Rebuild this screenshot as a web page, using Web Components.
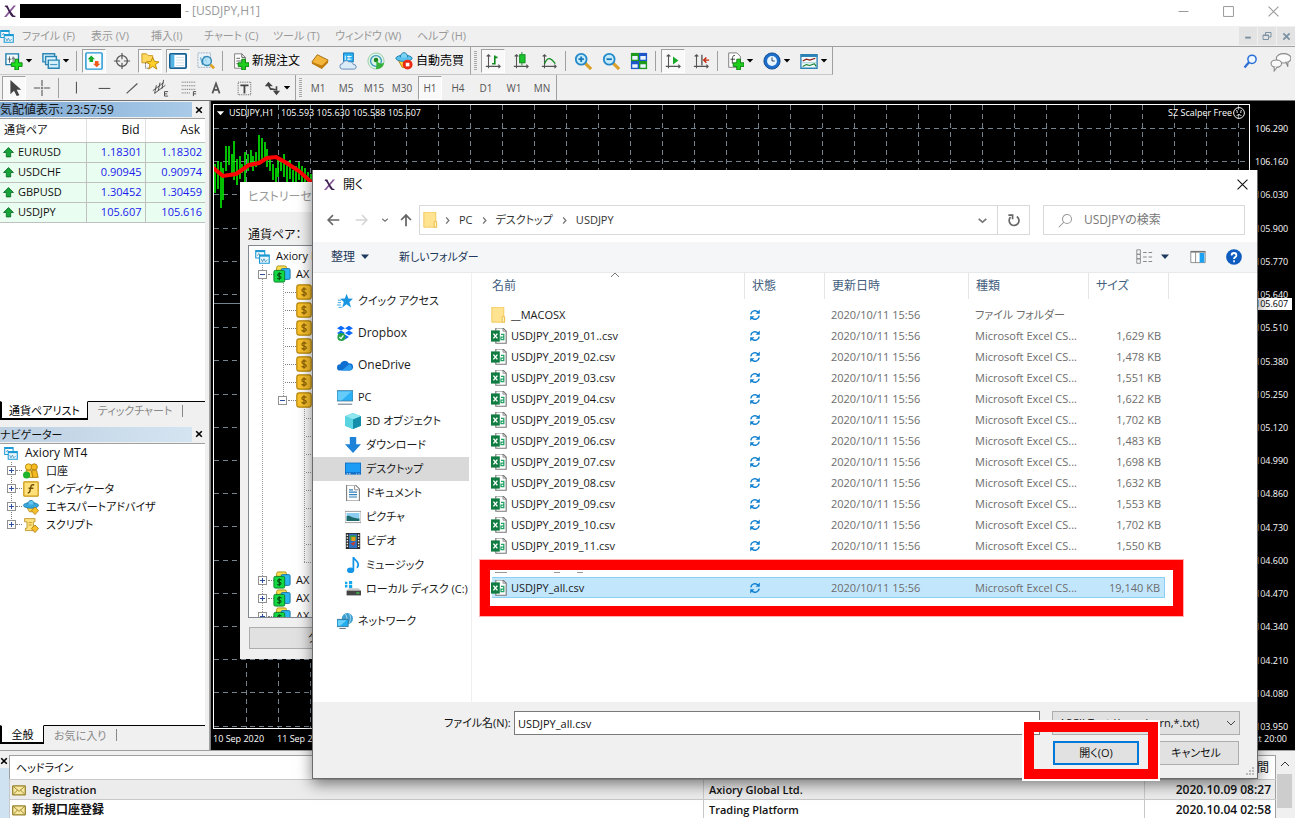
<!DOCTYPE html>
<html lang="ja">
<head>
<meta charset="utf-8">
<title>USDJPY,H1</title>
<style>
  html, body { height: 100%; }
  body {
    margin: 0; overflow: hidden; background: #f0f0f0; color: #111;
    font: 12px/18px "Open Sans", "Noto Sans CJK JP", sans-serif;
    font-feature-settings: "palt";
  }
</style>
</head>
<body>
<trading-app></trading-app>

<script>
/* ---------- icon set ---------- */
const page = '<path d="M4 2h8l4 4v12H4z" fill="#fff" stroke="#777"/><path d="M12 2v4h4M6 7h4M6 10h6M6 13h4" stroke="#555" fill="none"/>';
const plus = '<path d="M12 8h4v4h4v4h-4v4h-4v-4H8v-4h4z" fill="#1fd01f" stroke="#087d08"/>';
const axes = '<path d="M5 3v15M2 16h16M3 5l2-2 2 2M16 14l2 2-2 2" stroke="#555" fill="none" stroke-width="1.2"/>';
const windows2 = '<path d="M1 2h12v10H1z" fill="#fff" stroke="#1d9ad4" stroke-width="1.5"/><path d="M1 3h12" stroke="#1d9ad4" stroke-width="2.5"/><path d="M3 9l2-3 2 3" fill="none" stroke="#2a7fb0"/><path d="M6 8h13v11H6z" fill="#eaf7ff" stroke="#1d9ad4" stroke-width="1.5"/><path d="M6 9h13" stroke="#1d9ad4" stroke-width="2.5"/><path d="M8 13l2 4 2-4 2 4 3-3" fill="none" stroke="#2a7fb0"/>';
const ICONS = {
  brand: '<path d="M16 1h4L4 20H0z" fill="#8a5a9a"/><path d="M2 1h4l4 8 5 7c1 2 2 2 4 2v2c-4 1-6 0-8-3L5 6C4 4 3 3 1 3z" fill="#3d1f4f"/>',
  mt: windows2,
  newchart: '<path d="M1 2h14v12H1z" fill="#f2fbff" stroke="#1d7ba8" stroke-width="1.5"/><path d="M5 5v7M9 5v6M3 8h4M8 7h3" stroke="#555"/><path d="M11 8h4v4h4v4h-4v4h-4v-4H7v-4h4z" fill="#1fe01f" stroke="#087d08"/>',
  profiles: '<path d="M1 2h13v9H1z" fill="#e4f6ff" stroke="#2a85b5" stroke-width="1.6"/><path d="M4 5h12v9H4z" fill="#e4f6ff" stroke="#2a85b5" stroke-width="1.6"/><path d="M7 9h12v9H7z" fill="#d3effc" stroke="#2a85b5" stroke-width="1.6"/><path d="M9 14h8" stroke="#2a85b5"/>',
  market: '<rect x="1" y="1" width="18" height="18" rx="1" fill="#f6fdff" stroke="#2196d4" stroke-width="1.6"/><path d="M7 4l4 4H9v3H5V8H3z" fill="#17a82a"/><path d="M13 17l-4-4h2v-3h4v3h2z" fill="#f25a1d"/>',
  cross: '<circle cx="10" cy="10" r="6" fill="none" stroke="#555" stroke-width="1.4"/><path d="M10 1v7M10 12v7M1 10h7M12 10h7" stroke="#555" stroke-width="1.3"/>',
  favs: '<path d="M1 2h5l2 2h5v8H1z" fill="#ffd860" stroke="#c79417"/><path d="M5 12v6h4" fill="none" stroke="#333" stroke-dasharray="1 1"/><path d="M13 6l2 4.500 5 .5-4 3 1.500 5-4.500-3-4.500 3 1.500-5-4-3 5-.5z" fill="#ffd02a" stroke="#b88306"/>',
  panel: '<rect x="1" y="2" width="18" height="16" rx="1" fill="#fff" stroke="#146094" stroke-width="2"/><path d="M2 3h4v14H2z" fill="#53b4e8"/><path d="M8 6h9M8 9h9M8 12h9M8 15h9" stroke="#cfdce4"/>',
  tester: '<path d="M1 1h14v16H1z" fill="#e9f3f8" stroke="#9ab" stroke-dasharray="2 1"/><path d="M4 6l2 8 2-9 3 7" stroke="#2b86b5" fill="none"/><circle cx="11" cy="10" r="5" fill="#a9def7" fill-opacity=".8" stroke="#3488b5" stroke-width="1.5"/><path d="M15 14l4 4" stroke="#e0a223" stroke-width="3"/>',
  order: page + plus,
  gold: '<path d="M1 11l6-8 12 6-7 9z" fill="#f4b63a" stroke="#9c6606"/><path d="M1 11l11 4 7-6v3l-7 7-11-6z" fill="#c17e10"/>',
  cloud: '<path d="M5 1h11v10H5z" fill="#29aef0" stroke="#1178b5"/><path d="M7 4v5M9 5h5M9 8h5M11 4v5" stroke="#fff"/><path d="M4 19a3 3 0 0 1 0-6 4 4 0 0 1 7-2 4 4 0 0 1 5 3 2.500 2.500 0 0 1 1 5z" fill="#dcebf8" stroke="#5a86b5"/>',
  signal: '<circle cx="10" cy="10" r="9" fill="#ddf3e4" stroke="#95c9a9"/><circle cx="10" cy="10" r="6" fill="none" stroke="#3f9ac0" stroke-width="1.5"/><circle cx="10" cy="9" r="2.500" fill="#18851f"/><path d="M10 10c1 4 0 7 0 9 5 0 8-2 9-7l-4 1" fill="#36b23b"/>',
  robot: '<path d="M3 8l14-1-4 10H8z" fill="#ffce3c" stroke="#b5800c"/><ellipse cx="10" cy="7" rx="9" ry="3.500" fill="#59c1ec" stroke="#197ba8"/><path d="M6 6c0-7 8-7 8 0" fill="#7bd3f5" stroke="#197ba8"/><circle cx="14" cy="14" r="5.500" fill="#ea2a12"/><path d="M12 12h4v4h-4z" fill="#fff"/>',
  bars: axes + '<path d="M12 4v10M12 6h3M9 13h3" stroke="#0c8a1a" stroke-width="1.8" fill="none"/>',
  candles: axes + '<path d="M11 0v15" stroke="#0c8a1a"/><rect x="8.500" y="3" width="6" height="9" fill="#1bc32c" stroke="#0c8a1a"/>',
  line: axes + '<path d="M5 13c3-7 6-8 12 0" stroke="#0c8a1a" stroke-width="1.5" fill="none"/>',
  zoomin: '<path d="M12 12l7 7" stroke="#d9a02b" stroke-width="3.500"/><circle cx="8" cy="8" r="6" fill="#c5ecfc" stroke="#2489c9" stroke-width="2"/><path d="M5 8h6M8 5v6" stroke="#1878b8" stroke-width="2"/>',
  zoomout: '<path d="M12 12l7 7" stroke="#d9a02b" stroke-width="3.500"/><circle cx="8" cy="8" r="6" fill="#c5ecfc" stroke="#2489c9" stroke-width="2"/><path d="M5 8h6" stroke="#1878b8" stroke-width="2"/>',
  tiles: '<path d="M1 1h9v9H1z" fill="#1d9a1d"/><path d="M10 1h9v9h-9z" fill="#1c55c8"/><path d="M1 10h9v9H1z" fill="#1c55c8"/><path d="M10 10h9v9h-9z" fill="#1d9a1d"/><path d="M2.500 4.500h6v4h-6zM11.500 4.500h6v4h-6zM2.500 13.500h6v4h-6zM11.500 13.500h6v4h-6z" fill="#e8f4ff"/>',
  scroll: axes + '<path d="M10 5l6 4.500-6 4.500z" fill="#18a828"/>',
  shift: axes + '<path d="M11 3v12" stroke="#555" stroke-width="1.5"/><path d="M19 9h-6M16 6l-3 3 3 3" stroke="#c22a0c" stroke-width="1.6" fill="none"/>',
  indicators: '<path d="M3 1h9l4 4v12H3z" fill="#fff" stroke="#777"/><path d="M10 4c-3-1-3 3-3 9M5 8h5" stroke="#333" fill="none"/>' + plus,
  clock: '<circle cx="10" cy="10" r="9" fill="#1d6fcb" stroke="#0d478c"/><circle cx="10" cy="10" r="5.500" fill="#e8f6ff"/><path d="M10 6v4h3" stroke="#235" fill="none"/>',
  template: '<path d="M1 3h18v15H1z" fill="#f4fbff" stroke="#2a82b5" stroke-width="1.500"/><path d="M1 4h18" stroke="#2a82b5" stroke-width="3"/><path d="M3 10l4-2 4 1 6-2" stroke="#8a1c0e" fill="none" stroke-width="1.300"/><path d="M3 16l4-2 4 1 5-2 2 3" stroke="#14802a" fill="none" stroke-width="1.300"/><path d="M2 12h16" stroke="#9cc"/>',
  arrow: '<path d="M6 1v16l4-4 3 6 3-1-3-6h5z" fill="#444"/>',
  plusthin: '<path d="M10 1v7M10 12v7M1 10h7M12 10h7M10 9v2M9 10h2" stroke="#555" stroke-width="1.200"/>',
  vline: '<path d="M10.500 3v13" stroke="#555" stroke-width="1.200"/>', hline: '<path d="M4 10.500h13" stroke="#555" stroke-width="1.200"/>',
  trend: '<path d="M4 16L16 5" stroke="#555" stroke-width="1.300"/>',
  channel: '<path d="M2 13l12-9M4 16l12-9M6 7l-2 9M10 4l-2 9M14 1l-2 10" stroke="#444"/><path d="M19 14h-4v5h4M15 16.500h3" stroke="#444" fill="none"/>',
  fibo: '<path d="M3 3.500h15M3 7.500h15M3 11.500h15M3 15.500h10" stroke="#555" stroke-dasharray="1 1"/><path d="M19 14h-3v5M16 16.500h3" stroke="#444" fill="none"/>',
  lettera: '<path d="M6 16l4-11 4 11M7.500 12h5" stroke="#555" stroke-width="1.900" fill="none"/>',
  textbox: '<rect x="3.500" y="3.500" width="14" height="14" fill="none" stroke="#555" stroke-dasharray="1 1"/><path d="M6 7h9M10.500 7v9" stroke="#444" stroke-width="2"/>',
  arrows: '<path d="M2 8l4-5 5 5zM11 13h8l-4 5z" fill="#444"/><path d="M6 7l3 5M9 11l5 1M15 8v5" stroke="#444" stroke-width="1.800"/>',
  find: '<circle cx="12" cy="7" r="5.500" fill="#eef6ff" stroke="#2b6fd6" stroke-width="2"/><path d="M8 11l-6 7" stroke="#2b6fd6" stroke-width="3"/>',
  chat: '<ellipse cx="13" cy="7" rx="7" ry="4.500" fill="#fafafa" stroke="#888"/><path d="M15 10l2 5v-5" fill="#fafafa" stroke="#888"/><ellipse cx="6" cy="12" rx="5" ry="3.500" fill="#fafafa" stroke="#888"/><path d="M4 15v4l3-4" fill="#fafafa" stroke="#888"/>',
  up: '<path d="M10 1l9 9h-5v8H6v-8H1z" fill="#18a33a" stroke="#0a6b24" stroke-width="1.500"/>',
  accounts: '<circle cx="7" cy="5" r="4" fill="#ffd23e" stroke="#a87706"/><circle cx="14" cy="5" r="4" fill="#f4b91f" stroke="#a87706"/><path d="M4 9h6l3 9H4z" fill="#ffd23e" stroke="#a87706"/><path d="M11 9h6l2 9h-7z" fill="#f4b91f" stroke="#a87706"/><circle cx="4.500" cy="15" r="4.500" fill="#1eb32c"/>',
  func: '<rect x="1" y="1" width="18" height="18" rx="1" fill="#ffe07a" stroke="#c9960c" stroke-width="1.500"/><path d="M14 5c-4-1-4 1-5 6-.5 3-1 4-3 4M7 9h6" stroke="#6f4d05" stroke-width="1.800" fill="none"/>',
  expert: '<path d="M4 9h11l-3 7H8z" fill="#ffd345" stroke="#b58410"/><ellipse cx="10" cy="8" rx="9.500" ry="3.500" fill="#38a7de" stroke="#1577a8"/><path d="M6 7c0-7 8-7 8 0" fill="#62c6f0" stroke="#1577a8"/><path d="M15 10l4.500 4.500-4.500 5-4.500-5z" fill="#f7bf2a" stroke="#a87706"/>',
  script: '<path d="M2 2h13v4h-2v8h3v3H3v-3h2V6H2z" fill="#ffe27d" stroke="#b58a1c"/><path d="M7 7h4M7 10h4" stroke="#b58a1c"/><path d="M15 10l4.500 4.500-4.500 5-4.500-5z" fill="#f7bf2a" stroke="#a87706"/>',
  group: '<rect x="4" y="1" width="11" height="12" rx="2" fill="#f7dc4e" stroke="#a88d10"/><rect x="9" y="4" width="10" height="12" rx="1.500" fill="#2ab5f0" stroke="#1471a3"/><rect x="1" y="6" width="12" height="13" rx="1.500" fill="#12d843" stroke="#067a24"/><path d="M9.500 10c-4-2-6 2-2.500 2.500s2 4-2.500 2.500M7 8v9" stroke="#054d12" fill="none" stroke-width="1.200"/>',
  coin: '<rect x="1" y="1" width="18" height="18" rx="3" fill="#fac22b" stroke="#b8860b" stroke-width="1.500"/><path d="M13 7c-5-3-8 2-3 3s3 6-3 3M10 4v12" stroke="#8c6206" fill="none" stroke-width="1.500"/>',
  mail: '<rect x="1" y="4" width="18" height="13" rx="1" fill="#f7e7a0" stroke="#96822a" stroke-width="1.800"/><path d="M2 5l8 7 8-7M2 16l6-6M18 16l-6-6" fill="none" stroke="#96822a" stroke-width="1.300"/>',
  back: '<path d="M3 10h16M10 3l-7 7 7 7" fill="none" stroke="#666" stroke-width="2.200"/>',
  fwd: '<path d="M1 10h16M10 3l7 7-7 7" fill="none" stroke="#d5d5d5" stroke-width="2.200"/>',
  upnav: '<path d="M10 19V3M3 10l7-7 7 7" fill="none" stroke="#666" stroke-width="2.500"/>',
  chev: '<path d="M3 7l7 6 7-6" fill="none" stroke="currentColor" stroke-width="3"/>',
  chevthin: '<path d="M2 6l8 8 8-8" fill="none" stroke="currentColor" stroke-width="2"/>',
  chevr: '<path d="M7 3l6 7-6 7" fill="none" stroke="currentColor" stroke-width="3"/>',
  caret: '<path d="M2 5h16l-8 9z" fill="currentColor"/>',
  refresh: '<path d="M5 6a7 7 0 1 0 9-1" fill="none" stroke="#666" stroke-width="2.400"/><path d="M2 3h6v6" fill="none" stroke="#666" stroke-width="2.400"/>',
  glass: '<circle cx="12" cy="8" r="6" fill="none" stroke="#999" stroke-width="1.400"/><path d="M8 12l-7 7" stroke="#999" stroke-width="1.400"/>',
  close: '<path d="M1 1l18 18M19 1L1 19" stroke="currentColor" stroke-width="2"/>',
  closebold: '<path d="M3 3l14 14M17 3L3 17" stroke="currentColor" stroke-width="4"/>',
  min: '<path d="M1 10h18" stroke="currentColor" stroke-width="1.800"/>',
  max: '<path d="M1 1h18v18H1z" fill="none" stroke="currentColor" stroke-width="1.800"/>',
  minbold: '<path d="M3 14h14" stroke="currentColor" stroke-width="5"/>',
  restore: '<path d="M7 8V3h11v9h-4M2 8h11v9H2zM2 9h11" fill="none" stroke="currentColor" stroke-width="2"/>',
  folder: '<path d="M1 0h15v12l1 1v6H1z" fill="#ffe391" stroke="#f0c24b"/><path d="M14 12h3v7h-3z" fill="#fff2c4" stroke="#e8b63a"/>',
  view: '<path d="M2 2h4v5H2zM2 7h4v5H2zM2 12h4v5H2z" fill="none" stroke="#888"/><path d="M9 5h4M15 5h4M9 10h4M15 10h4M9 15h4M15 15h4" stroke="#888" stroke-width="1.200"/>',
  pane: '<path d="M1 3h18v14H1z" fill="#fff" stroke="#777"/><path d="M1 3.500h18" stroke="#777" stroke-width="2"/><path d="M7 4v13" stroke="#777"/><path d="M12 5h6v12h-6z" fill="#1ba1f2"/>',
  help: '<circle cx="10" cy="10" r="9.800" fill="#0f5cc0"/><path d="M7 8c0-4 6-4 6 0 0 2-3 2-3 4.500" fill="none" stroke="#fff" stroke-width="2.200"/><path d="M9 14h2v2.500H9z" fill="#fff"/>',
  star: '<path d="M12 1l2.200 6 5.800.3-4.500 4 2 6.700-5.500-4-5.500 4 2-6.700-4.500-4 5.800-.3z" fill="#1795e0"/><path d="M1 9h4M1 12h4M0 15h5M2 18h4" stroke="#1795e0"/>',
  dropbox: '<path d="M5 1l5 3-5 3-5-3zM15 1l5 3-5 3-5-3zM5 7l5 3-5 3-5-3zM15 7l5 3-5 3-5-3zM10 12l5 3-5 3-5-3z" fill="#0a6bff"/><circle cx="5.500" cy="15" r="5" fill="#21a046"/><path d="M3 15l2 2 3-4" stroke="#fff" fill="none" stroke-width="1.500"/>',
  onedrive: '<path d="M4 17a4 4 0 0 1 0-8 6 6 0 0 1 11-1 4.500 4.500 0 0 1 1 9z" fill="#0f6fd0"/><path d="M6 17l9-8a4.500 4.500 0 0 1 2 8z" fill="#2a9df0"/>',
  pc: '<path d="M0 2h20v13H0z" fill="#2bb0f5" stroke="#4a7b98"/><path d="M1 3h17L6 14H1z" fill="#66cdfb"/><path d="M1 19h18" stroke="#789" stroke-width="1.500"/>',
  cube: '<path d="M10 0l10 4v12l-10 4L0 16V4z" fill="#28b8d0"/><path d="M10 0l10 4-10 4L0 4z" fill="#90e6ee"/><path d="M0 4l10 4v12L0 16z" fill="#59d4e0"/><path d="M10 8l10-4v12l-10 4z" fill="#148eab"/>',
  download: '<path d="M6 0h8v9h6L10 20 0 9h6z" fill="#1d83d8"/>',
  desktop: '<path d="M0 2h20v15H0z" fill="#0f6dc4"/><path d="M1 3h18v11H1z" fill="#1c9cf5"/><path d="M2 16h2M5 16h2M14 16h1M17 16h1" stroke="#fff"/>',
  doc: '<path d="M2 0h11l5 5v15H2z" fill="#fff" stroke="#777" stroke-width="1.300"/><path d="M12 1v5h5" stroke="#777" fill="none"/><path d="M5 6h5M5 9h10M5 12h10M5 15h10" stroke="#2f7fb8" fill="none" stroke-width="1.500"/>',
  picture: '<path d="M0 3h20v14H0z" fill="#fff" stroke="#888"/><path d="M2 5h16v10H2z" fill="#8ccdf2"/><path d="M2 9c4-2 7 3 16 3v3H2z" fill="#1d6a6a"/>',
  video: '<path d="M1 0h18v20H1z" fill="#2b2b2b"/><path d="M5 1h10v18H5z" fill="#2f6fc0"/><path d="M6 3h8v6H6z" fill="#3b9a42"/><path d="M8 5h5v5H8z" fill="#e99a1c"/><path d="M7 13l6-2-2 5z" fill="#c83a2a"/><path d="M3 2v17M17 2v17" stroke="#eee" stroke-width="1.800" stroke-dasharray="1.800 1.600"/>',
  music: '<ellipse cx="7" cy="16.500" rx="4.500" ry="3.500" fill="#1595e8"/><path d="M10.500 16V0c1 4 6 5 6 9 0 2-1 4-2 4" fill="none" stroke="#1595e8" stroke-width="2.200"/>',
  disk: '<path d="M0 1h3v3H0zM5 0h4v4H5zM0 5h3v3H0zM5 5h4v4H5z" fill="#16a8ea"/><path d="M2 12l3-3h12l3 3z" fill="#c8c8c8"/><path d="M2 12h18v6H2z" fill="#444"/><path d="M14 15h4" stroke="#3be052" stroke-width="1.500"/>',
  network: '<circle cx="13" cy="7" r="7" fill="#3e9fd0"/><path d="M10 1c3 3 3 8 1 12M15 1c3 3 2 9 0 12" stroke="#bfe3ee" fill="none"/><path d="M0 8h14v9H0z" fill="#22aef2" stroke="#2f6d8f"/><path d="M1 9h11l-8 7H1z" fill="#6bd0fa"/><path d="M3 19.500h8" stroke="#678" stroke-width="1.500"/>',
  sync: '<path d="M3 9a7 7 0 0 1 12-4M17 11a7 7 0 0 1-12 4" fill="none" stroke="#1080d0" stroke-width="2.400"/><path d="M18 1v7h-7zM2 19v-7h7z" fill="#1080d0"/>',
  csv: '<path d="M6 0h9l4 4v15H6z" fill="#fff" stroke="#777" stroke-width="1.400"/><path d="M15 0v4h4" fill="none" stroke="#777"/><path d="M12.500 8h3.500v6.500h-3.500v-3h3.500" fill="none" stroke="#21a366" stroke-width="1.600"/><path d="M0 3h11v14H0z" fill="#107c41"/><path d="M3 7l5 6M8 7l-5 6" stroke="#fff" stroke-width="1.800"/>',
  sad: '<circle cx="10" cy="10" r="9" fill="none" stroke="#fff" stroke-width="1.600"/><path d="M5 6l3 1M15 6l-3 1M7 8v2M13 8v2M6 15l2-2h4l2 2" stroke="#fff" stroke-width="1.500" fill="none"/>'
};
const icon = (name, size = 16) =>
  `<svg class="ico" width="${size}" height="${size}" viewBox="0 0 20 20" aria-hidden="true">${ICONS[name]}</svg>`;

/* ---------- base element ---------- */
class UiElement extends HTMLElement {
  connectedCallback() {
    if (this.shadowRoot) return;
    const root = this.attachShadow({ mode: 'open' });
    const t = document.createElement('template');
    t.innerHTML = `<style>*{box-sizing:border-box}.ico{display:block;flex:none}button{font:inherit;color:inherit;background:none;border:0;padding:0;margin:0}${this.css}</style>${this.html()}`;
    root.append(t.content.cloneNode(true));
  }
  get css() { return ''; }
  attr(n, d = '') { return this.getAttribute(n) ?? d; }
}
const define = (tag, css, html) => customElements.define(tag, class extends UiElement {
  get css() { return css; }
  html() { return html(this); }
});

/* ---------- window chrome ---------- */
define('title-bar', `
  :host{display:flex;align-items:center;height:26px;background:#fff;color:#999;padding:0 16px 4px 4px}
  .mask{width:161px;height:14px;background:#000;margin:0 4px}
  .text{flex:1}
  .win{display:flex;gap:34px}
`, () => `${icon('brand', 12)}<span class="mask"></span><span class="text">- [USDJPY,H1]</span>
  <span class="win"><button aria-label="最小化">${icon('min', 11)}</button><button aria-label="最大化">${icon('max', 11)}</button><button aria-label="閉じる">${icon('close', 11)}</button></span>`);

define('menu-bar', `
  :host{display:flex;align-items:center;height:21px;background:#f0f0f0;color:#999;border-bottom:1px solid #a0a0a0;font-size:11px}
  nav{display:grid;grid-template-columns:69px 60px 53px 69px 62px 82px 60px;flex:1;margin-left:8px}
  a{color:inherit;text-decoration:none;white-space:nowrap}
  .mdi{display:flex;gap:1px}
  .mdi button{width:18px;height:18px;background:#e3e3e3;color:#7d93a5;display:grid;place-items:center}
`, () => `${icon('mt', 14)}<nav>${['ファイル (F)', '表示 (V)', '挿入(I)', 'チャート (C)', 'ツール (T)', 'ウィンドウ (W)', 'ヘルプ (H)']
    .map(t => `<a href="#">${t}</a>`).join('')}</nav>
  <span class="mdi"><button aria-label="最小化">${icon('minbold', 8)}</button><button aria-label="元に戻す">${icon('restore', 10)}</button><button aria-label="閉じる">${icon('closebold', 9)}</button></span>`);

define('tool-button', `
  :host{display:flex;color:#555}
  button{display:flex;align-items:center;height:25px}
  .cell{width:28px;height:24px;display:grid;place-items:center}
  :host([pressed]) .cell{width:24px;margin:0 2px;border:1px solid #a0a0a0;border-right-color:#fff;border-bottom-color:#fff;background:#f9f9f9}
  .drop{width:12px;margin-left:-3px;color:#000}
  .label{color:#000;margin-left:-2px;padding-right:6px;white-space:nowrap;line-height:18px}
  .tf{font-size:10px}
`, el => {
    const tf = el.attr('period');
    return `<button aria-label="${el.attr('icon', tf)}"><span class="cell${tf ? ' tf' : ''}">${tf || icon(el.attr('icon'), 18)}</span>${el.hasAttribute('drop') ? `<span class="drop">${icon('caret', 8)}</span>` : ''}${el.textContent ? '<span class="label"><slot></slot></span>' : ''}</button>`;
  });

define('tool-bars', `
  :host{display:block;background:#f0f0f0;border-bottom:1px solid #707070}
  .row{display:flex;align-items:center;height:28px}
  .row+.row{height:25px}
  .band{display:flex;align-items:center;height:100%;border-right:1px solid #a0a0a0;border-bottom:1px solid #c8c8c8}
  .row+.row .band{border-bottom:0}
  .sep{width:1px;height:20px;background:#a0a0a0;margin:0 3px 0 2px}
  .grip{width:3px;height:20px;margin:0 2px 0 3px;background:repeating-linear-gradient(#a8a8a8 0 1px,#f0f0f0 1px 2px)}
  .end{margin-left:auto;display:flex;align-items:center;gap:12px;padding-right:4px}
`, () => {
    const b = (i, extra = '', label = '') => `<tool-button icon="${i}" ${extra}>${label}</tool-button>`;
    const sep = '<span class="sep"></span>', grip = '<span class="grip"></span>';
    return `<div class="row"><div class="band">${b('newchart', 'drop')}${b('profiles', 'drop')}${sep}${b('market', 'pressed')}${b('cross')}${b('favs', 'pressed')}${b('panel', 'pressed')}${b('tester')}${sep}${b('order', '', '新規注文')}${b('gold')}${b('cloud')}${b('signal')}${b('robot', '', '自動売買')}</div>
    <div class="band">${grip}${b('bars', 'pressed')}${b('candles')}${b('line')}${sep}${b('zoomin')}${b('zoomout')}${b('tiles')}${sep}${b('scroll', 'pressed')}${b('shift')}${sep}${b('indicators', 'drop')}${b('clock', 'drop')}${b('template', 'drop')}</div>
    <span class="end"><button aria-label="検索">${icon('find', 15)}</button><button aria-label="チャット">${icon('chat', 21)}</button></span></div>
    <div class="row"><div class="band">${b('arrow', 'pressed')}${b('plusthin')}${sep}${['vline', 'hline', 'trend', 'channel', 'fibo', 'lettera', 'textbox'].map(i => b(i)).join('')}${b('arrows', 'drop')}</div>
    <div class="band">${grip}${['M1', 'M5', 'M15', 'M30', 'H1', 'H4', 'D1', 'W1', 'MN'].map(p => `<tool-button period="${p}" ${p === 'H1' ? 'pressed' : ''}></tool-button>`).join('')}</div></div>`;
  });

/* ---------- left docks ---------- */
define('dock-panel', `
  :host{display:flex;flex-direction:column;min-height:0;background:#f0f0f0;border-right:1px solid #a0a0a0;padding-right:4px}
  header{display:flex;align-items:center;height:17px;line-height:15px}
  .cap{flex:1;background:linear-gradient(90deg,#7ea9d4,#a9cbe8);height:15px;white-space:nowrap}
  :host([inactive]) .cap{background:linear-gradient(90deg,#bcd0e2,#d5e4f1);font-size:11px}
  header button{width:13px;display:grid;place-items:center;color:#000}
  .body{flex:1;background:#fff;overflow:hidden;min-height:0;border-top:1px solid #a0a0a0}
  .tabs{display:flex;height:25px;color:#888;font-size:11px}
  .tabs button{height:19px;line-height:17px;padding:0 10px;border-top:1px solid #000;white-space:nowrap}
  .tabs .on{background:#fff;color:#000;border:1px solid #000;border-top-color:#fff;border-width:1px 1px 2px 2px;padding:0 7px;min-width:44px}
  .tabs .fill{flex:1;border-top:1px solid #000;height:19px;padding-top:3px}
  .fill::before{content:"";display:block;width:1px;height:12px;background:#888}
`, el => `<header><span class="cap">${el.attr('caption')}</span><button aria-label="閉じる">${icon('closebold', 8)}</button></header>
  <div class="body"><slot></slot></div>
  <div class="tabs" role="tablist">${el.attr('tabs').split(',').map((t, i) => `<button role="tab" class="${i ? '' : 'on'}">${t}</button>`).join('')}<span class="fill"></span></div>`);

define('market-watch', `
  :host{display:block}
  table{width:100%;border-collapse:collapse;table-layout:fixed}
  th{font-weight:400;text-align:right;height:23px;padding:0 5px;border-right:1px solid #e0e0e0;border-bottom:1px solid #c0c0c0}
  th:first-child{text-align:left;padding-left:4px;font-size:11px}
  td{height:20px;padding:0 3px;background:#e9fdf0;border:solid #c0c0c0;border-width:0 1px 1px 0;text-align:right;color:#1a1aee;font-size:11px;line-height:16px}
  td:first-child{color:#111;text-align:left}
  tr>*:last-child{border-right:0}
  .sym{display:flex;gap:4px;align-items:center}
`, () => `<table><colgroup><col style="width:86px"><col style="width:59px"><col></colgroup><thead><tr><th>通貨ペア</th><th>Bid</th><th>Ask</th></tr></thead><tbody>${
    [['EURUSD', '1.18301', '1.18302'], ['USDCHF', '0.90945', '0.90974'], ['GBPUSD', '1.30452', '1.30459'], ['USDJPY', '105.607', '105.616']]
      .map(([s, a, b]) => `<tr><td><span class="sym">${icon('up', 11)}${s}</span></td><td>${a}</td><td>${b}</td></tr>`).join('')}</tbody></table>`);

/* Tree rows: nested <ul>s; dotted lines are the backgrounds of the branches. */
const treeCss = `
  ul{list-style:none;margin:0;padding:0}
  .node{display:flex;align-items:center;height:18px;white-space:nowrap}
  .tog{width:9px;height:9px;flex:none;border:1px solid #919191;background:linear-gradient(#2b4e9e,#2b4e9e) center/5px 1px no-repeat,linear-gradient(#2b4e9e,#2b4e9e) center/1px 5px no-repeat,#fff}
  .tog.open{background:linear-gradient(#2b4e9e,#2b4e9e) center/5px 1px no-repeat,#fff}
  .dots{height:1px;flex:none;border-top:1px dotted #808080}
`;
define('nav-tree', `${treeCss}
  :host{display:block}
  ul{font-size:11px}
  .root{padding-left:4px;gap:7px}
  li{padding-left:7px;background:repeating-linear-gradient(#808080 0 1px,#fff 1px 2px) 11px 0/1px 100% no-repeat}
  li:last-child{background-size:1px 9px}
  .dots{width:6px;margin-right:1px}
  .ico+span{margin-left:7px}
`, () => `<div class="node root">${icon('mt', 14)}Axiory MT4</div><ul>${
    [['accounts', '口座'], ['func', 'インディケータ'], ['expert', 'エキスパートアドバイザ'], ['script', 'スクリプト']]
      .map(([i, t]) => `<li><div class="node"><span class="tog"></span><span class="dots"></span>${icon(i, 16)}<span>${t}</span></div></li>`).join('')}</ul>`);

/* ---------- chart ---------- */
define('price-chart', `
  :host{display:grid;grid-template:3px 1fr 21px/2px 1fr 45px;background:#000;color:#fff;font-size:9px;line-height:12px;min-width:0;min-height:0;overflow:hidden;border-left:1px solid #808080}
  .plot{grid-area:2/2;position:relative;border:1px solid #fff;overflow:hidden}
  .plot svg.grid{position:absolute;inset:0;width:100%;height:100%}
  .legend{position:relative;display:flex;justify-content:space-between;padding:2px 4px 0 2px}
  .legend span{display:flex;gap:4px;align-items:center;white-space:pre}
  .legend span+span{gap:1px}
  .prices{grid-area:2/3;display:flex;flex-direction:column;justify-content:space-between;padding:19px 0 0 5px;margin-bottom:-4px;position:relative}
  .now{position:absolute;left:2px;right:3px;top:194px;padding-left:3px;background:#fff;color:#000}
  .time{grid-area:3/2/4/4;display:flex;padding:4px 8px 0 0;white-space:nowrap}
  .time span{width:64px}
  .time .last{margin-left:auto;width:auto}
`, () => {
    const bars = [[1, 60, 88], [4, 57, 84], [7, 58, 103], [9, 64, 95], [12, 42, 66], [15, 42, 60], [18, 50, 70], [20, 37, 75], [23, 55, 80], [26, 52, 74], [28, 60, 68], [31, 48, 78], [34, 50, 66], [37, 46, 62], [39, 52, 66], [42, 48, 62], [45, 31, 56], [48, 34, 54], [51, 38, 55], [53, 45, 62], [56, 52, 66], [59, 60, 75], [62, 64, 78], [64, 55, 72], [67, 58, 66], [70, 50, 72], [73, 60, 80], [76, 56, 74], [79, 66, 84], [82, 62, 78], [85, 58, 75], [88, 62, 82], [91, 64, 80], [94, 68, 85], [97, 70, 92]];
    const v = Array.from({ length: 33 }, (_, i) => `M${32.5 + 32 * i} 0V2000`).join('');
    const h = Array.from({ length: 19 }, (_, i) => `M0 ${Math.round(24 + 33.2 * i) - .5}H3000`).join('');
    const labels = '106.290 106.160 106.030 105.900 105.770 105.640 105.510 105.380 105.250 105.120 104.990 104.860 104.730 104.600 104.470 104.340 104.210 104.080 103.950'.split(' ');
    return `<div class="plot"><svg class="grid" aria-hidden="true"><path d="${v}${h}" stroke="#75838f" stroke-dasharray="5 4" fill="none"/><path d="M0 198.500H3000" stroke="#75838f"/><path d="${bars.map(b => `M${b[0]} ${b[1] - 1}V${b[2]}`).join('')}" stroke="#0f0" stroke-width="1.500"/><path d="M-2 62l11 9 13-2 13-9 10-2 8-5 9-1 9 5 14 9 10 9 12 10" fill="none" stroke="#f00" stroke-width="4"/></svg>
      <div class="legend"><span>${icon('caret', 9)}USDJPY,H1   105.593 105.630 105.588 105.607</span><span>SZ Scalper Free${icon('sad', 12)}</span></div></div>
      <div class="prices">${labels.map(l => `<span>${l}</span>`).join('')}<span class="now">105.607</span></div>
      <div class="time"><span>10 Sep 2020</span><span>11 Sep 2020</span><span class="last">Oct 20:00</span></div>`;
  });

/* ---------- history centre ---------- */
define('history-center', `${treeCss}
  :host{display:flex;flex-direction:column;background:#f0f0f0}
  h2{margin:0;font-weight:400;font-size:12px;background:#fff;color:#999;height:30px;line-height:30px;padding-left:8px;white-space:nowrap;flex:none}
  .cap{padding:14px 8px 1px;white-space:nowrap}
  .list{flex:1;min-height:0;margin-left:8px;background:#fff;border:1px solid #828790;overflow:hidden;padding-top:1px}
  .root{padding-left:6px;gap:6px;font-size:11px}
  .list ul{font-size:11px}
  .g{padding-left:9px;background:repeating-linear-gradient(#999 0 1px,#fff 1px 2px) 13px 0/1px 100% no-repeat}
  .g>.node>.dots{width:6px;margin-left:1px}
  .g>.node .ico{margin:0 5px 0 -1px}
  .kids{padding-left:20px}
  .c{background:repeating-linear-gradient(#999 0 1px,#fff 1px 2px) 5px 0/1px 100% no-repeat}
  .c:last-child{background-size:1px 9px}
  .gap{width:6px;flex:none}
  .long{width:11px;margin-left:1px}
  .short{width:8px;margin-left:1px}
  .leaf{padding-left:26px}
  .leaf li{height:18px;background:repeating-linear-gradient(#999 0 1px,#fff 1px 2px) 0 0/1px 100% no-repeat,repeating-linear-gradient(90deg,#999 0 1px,#fff 1px 2px) 0 9px/9px 1px no-repeat}
  .leaf li:last-child{background-size:1px 9px,9px 1px}
  .act{flex:none;margin:9px 0 10px 9px;height:22px;border:1px solid #adadad;background:#e1e1e1;text-align:left;padding-left:58px;white-space:nowrap}
`, () => {
    const g = (open, kids = '') => `<li class="g"><div class="node"><span class="tog ${open}"></span><span class="dots"></span>${icon('group', 18)}AX</div>${kids}</li>`;
    const coin = `<li class="c"><div class="node"><span class="gap"></span><span class="dots long"></span>${icon('coin', 16)}</div></li>`;
    const last = `<li class="c"><div class="node"><span class="tog open"></span><span class="dots short"></span>${icon('coin', 16)}</div><ul class="leaf">${'<li></li>'.repeat(9)}</ul></li>`;
    return `<h2>ヒストリーセンター</h2><div class="cap">通貨ペア：</div>
    <div class="list"><div class="node root">${icon('mt', 15)}Axiory MT4</div><ul>${g('open', `<ul class="kids">${coin.repeat(6)}${last}</ul>`)}${g('')}${g('')}${g('')}</ul></div>
    <button class="act">ダウンロード</button>`;
  });

/* ---------- open dialog ---------- */
define('highlight-frame', `:host{display:block;border:10px solid #f00;pointer-events:none;outline:1px solid #ffb0b0}`, () => '');

define('path-bar', `
  :host{display:flex;align-items:center;height:30px;margin:0 12px 0 13px;color:#333;font-size:11px}
  .nav{display:flex;align-items:center;width:93px;color:#777}
  .nav button:nth-child(1){margin-right:15px}.nav button:nth-child(2){margin-right:12px}.nav button:nth-child(3){margin-right:10px}
  .addr{flex:1;display:flex;align-items:center;height:30px;border:1px solid #d9d9d9;padding-left:3px}
  .addr a{color:inherit;text-decoration:none;margin:0 7px}
  .first{margin-left:4px}
  .chevs{color:#777}
  .dd{margin-left:auto;padding:0 9px;color:#777}
  .re{height:28px;width:32px;border-left:1px solid #d9d9d9;display:grid;place-items:center}
  label{display:flex;align-items:center;width:202px;height:30px;border:1px solid #d9d9d9;margin-left:13px;padding-left:14px;gap:11px;font-size:12px}
  input{border:0;font:inherit;padding:0;width:140px;background:none}
  input::placeholder{color:#777;opacity:1}
`, () => {
    const sep = (c = '') => `<span class="chevs ${c}">${icon('chevr', 9)}</span>`;
    return `<span class="nav"><button aria-label="戻る">${icon('back', 14)}</button><button aria-label="進む">${icon('fwd', 14)}</button><button aria-label="履歴">${icon('chev', 8)}</button><button aria-label="上へ">${icon('upnav', 14)}</button></span>
    <span class="addr">${icon('folder', 16)}${sep('first')}<a href="#">PC</a>${sep()}<a href="#">デスクトップ</a>${sep()}<a href="#">USDJPY</a><button class="dd" aria-label="一覧">${icon('chev', 11)}</button><button class="re" aria-label="更新">${icon('refresh', 14)}</button></span>
    <label>${icon('glass', 15)}<input aria-label="検索" placeholder="USDJPYの検索"></label>`;
  });

define('command-bar', `
  :host{display:flex;align-items:center;height:31px;margin-top:7px;background:#f5f6f7;border-bottom:1px solid #e8e9ea;color:#1e395b;padding:0 15px 0 18px}
  button{display:flex;align-items:center;gap:5px;white-space:nowrap;margin-right:29px}
  .new{font-size:11px}
  .r{margin-left:auto;display:flex;align-items:center}
  .r button{gap:7px;margin:0 0 0 20px}
`, () => `<button>整理${icon('caret', 10)}</button><button class="new">新しいフォルダー</button>
  <span class="r"><button aria-label="表示">${icon('view', 18)}${icon('caret', 10)}</button><button aria-label="プレビュー">${icon('pane', 16)}</button><button aria-label="ヘルプ">${icon('help', 16)}</button></span>`);

define('place-list', `
  :host{display:block;width:159px;padding-top:16px;border-right:1px solid #f0f0f0;font-size:11px}
  ul{list-style:none;margin:0 0 8px;padding:0}
  li{width:156px}
  a{display:flex;align-items:center;gap:5px;height:24px;padding-left:24px;color:#1a1a1a;text-decoration:none;white-space:nowrap}
  .sub a{padding-left:32px}
  .on{background:#d9d9d9}
  .lat{font-size:12px}
`, () => {
    const li = ([i, t, sub, on]) => `<li class="${sub ? 'sub' : ''} ${on ? 'on' : ''}"><a href="#">${icon(i, 16)}${t}</a></li>`;
    return [
      [['star', 'クイック アクセス']], [['dropbox', 'Dropbox']], [['onedrive', 'OneDrive']],
      [['pc', 'PC'], ['cube', '3D オブジェクト', 1], ['download', 'ダウンロード', 1], ['desktop', 'デスクトップ', 1, 1], ['doc', 'ドキュメント', 1], ['picture', 'ピクチャ', 1], ['video', 'ビデオ', 1], ['music', 'ミュージック', 1], ['disk', 'ローカル ディスク (C:)', 1]],
      [['network', 'ネットワーク']]
    ].map((g, n) => `<ul class="${n === 1 || n === 2 ? 'lat' : ''}">${g.map(li).join('')}</ul>`).join('');
  });

define('file-table', `
  :host{display:block;flex:1;padding-left:20px;min-width:0}
  table{width:100%;border-collapse:separate;border-spacing:0;table-layout:fixed}
  th{font-weight:400;text-align:left;height:26px;padding:0 0 0 7px;color:#44607e;border-left:1px solid #e5e5e5;position:relative}
  th:first-child{padding:0;border:0}
  th:last-child{border:0;background:linear-gradient(#e5e5e5,#e5e5e5) 3px 0/1px 100% no-repeat}
  .sort{position:absolute;left:118px;top:-3px;transform:rotate(180deg);color:#777}
  td{height:21px;padding:0 0 0 7px;color:#6d6d6d;white-space:nowrap;font-size:11px;line-height:19px;border:1px solid transparent;border-width:1px 0}
  td:first-child{padding:0;color:#1a1a1a}
  td:nth-child(2){padding-left:5px}
  td:nth-child(5){text-align:right;padding-right:4px}
  .n{display:flex;align-items:center;gap:4px;margin-left:-1px}
  .on td:not(:last-child){background:#c2e7fd;border-color:#8ad0f5}
  .on td:nth-child(5){border-right:1px solid #8ad0f5}
  thead::after{content:"";display:block;height:5px}
`, () => {
    const row = (n, size, i = 'csv', type = 'Microsoft Excel CS...', cls = '') => `<tr class="${cls}"><td><span class="n">${icon(i, 16)}${n}</span></td><td>${icon('sync', 12)}</td><td>2020/10/11 15:56</td><td>${type}</td><td>${size}</td><td></td></tr>`;
    const sizes = '1,629 1,478 1,551 1,622 1,702 1,483 1,698 1,632 1,553 1,702 1,550'.split(' ');
    return `<table><colgroup><col style="width:252px"><col style="width:80px"><col style="width:144px"><col style="width:120px"><col style="width:77px"><col></colgroup>
    <thead><tr><th>名前<span class="sort">${icon('chevthin', 10)}</span></th><th>状態</th><th>更新日時</th><th>種類</th><th>サイズ</th><th></th></tr></thead><tbody>
    ${row('__MACOSX', '', 'folder', 'ファイル フォルダー')}${sizes.map((s, i) => row(`USDJPY_2019_${String(i + 1).padStart(2, '0')}${i ? '' : '.'}.csv`, s + ' KB')).join('')}
    <tr><td colspan="6"><svg class="ico" width="120" height="19" aria-hidden="true"><path d="M3 15.500h12M62 15.500h6M85 15.500h6" stroke="#999"/></svg></td></tr>
    ${row('USDJPY_all.csv', '19,140 KB', 'csv', 'Microsoft Excel CS...', 'on')}</tbody></table>`;
  });

define('dialog-footer', `
  :host{display:grid;grid-template-columns:1fr 188px;column-gap:12px;row-gap:6px;background:#f0f0f0;padding:9px 17px 13px 131px;position:relative;font-size:11px}
  .file{display:flex;align-items:center;gap:5px;min-width:0}
  label{white-space:nowrap;width:65px}
  input{flex:1;min-width:0;height:24px;border:1px solid #7a7a7a;font:inherit;padding:0 3px;color:#111}
  .combo{position:relative}
  select{appearance:none;width:100%;height:24px;border:1px solid #adadad;background:#e1e1e1;font:inherit;padding:0 6px;color:#111;border-radius:0}
  .combo .ico{position:absolute;right:4px;top:7px;color:#444}
  .btns{grid-column:2;display:flex;gap:14px;padding:0 1px}
  .btns button{height:24px;width:86px;border:1px solid #adadad;background:#e1e1e1;white-space:nowrap}
  .btns .ok{border:2px solid #0078d7}
  .grip{position:absolute;right:2px;bottom:2px}
`, () => `<span class="file"><label for="f">ファイル名(N):</label><input id="f" value="USDJPY_all.csv"></span>
  <span class="combo"><select aria-label="種類"><option>ASCII Text (*.csv,*.prn,*.txt)</option></select>${icon('chevthin', 10)}</span>
  <span class="btns"><button class="ok">開く(O)</button><button>キャンセル</button></span>
  <svg class="grip" width="9" height="9" aria-hidden="true"><path d="M6 0h2v2H6zM6 3h2v2H6zM6 6h2v2H6zM3 3h2v2H3zM3 6h2v2H3zM0 6h2v2H0z" fill="#bbb"/></svg>`);

define('open-dialog', `
  :host{display:flex;flex-direction:column;background:#fff;border:1px solid #6b6b6b;border-top:0;box-shadow:0 5px 14px rgba(0,0,0,.5)}
  header{display:flex;align-items:center;gap:8px;height:29px;padding:0 9px 0 11px;flex:none}
  h1{font-size:12px;font-weight:400;margin:0;flex:1}
  path-bar{margin-top:6px}
  .body{flex:1;display:flex;min-height:0}
  .mark{position:absolute}
  .row{left:167px;right:74px;top:390px;height:56px}
  .ok{right:99px;bottom:-1px;width:134px;height:57px;outline:2px solid #fff}
`, () => `<header>${icon('brand', 11)}<h1>開く</h1><button aria-label="閉じる">${icon('close', 11)}</button></header>
  <path-bar></path-bar><command-bar></command-bar><div class="body"><place-list></place-list><file-table></file-table></div><dialog-footer></dialog-footer>
  <highlight-frame class="mark row"></highlight-frame><highlight-frame class="mark ok"></highlight-frame>`);

/* ---------- terminal ---------- */
define('news-terminal', `
  :host{display:flex;background:#f0f0f0;border-top:1px solid #a0a0a0;padding-top:4px;overflow:hidden}
  .strip{width:9px;flex:none;background:linear-gradient(#f0f0f0 0 13px,#cfe2f2 13px);padding-top:2px;color:#000}
  table{flex:1;width:100%;border-collapse:collapse;table-layout:fixed;background:#fff;border:1px solid #a0a0a0}
  th{font-weight:400;text-align:left;height:24px;padding:0 6px;font-size:11px}
  td{font-weight:600;height:20px;padding:0 5px;border-left:1px solid #c8c8c8;border-top:1px solid #c8c8c8;white-space:nowrap;line-height:18px;font-size:11px}
  tr>*:last-child{text-align:right;font-size:12px}
  td:last-child{padding-right:4px}
  td:first-child{padding-left:2px}
  .n{display:flex;align-items:center;gap:6px}
  .alt td{background:#ececec}
  .ja{font-size:12px}
  .bar{width:17px;margin-right:2px;flex:none;background:#f0f0f0;display:flex;flex-direction:column;align-items:center;gap:5px;color:#333}
  .bar i{width:15px;height:34px;background:#cdcdcd}
  .bar .ico{transform:rotate(180deg);margin-top:4px}
`, () => `<div class="strip">${icon('closebold', 8)}</div><table><colgroup><col><col style="width:441px"><col style="width:131px"></colgroup><thead><tr><th>ヘッドライン</th><th></th><th>時間</th></tr></thead><tbody>
  <tr class="alt"><td><span class="n">${icon('mail', 14)}Registration</span></td><td>Axiory Global Ltd.</td><td>2020.10.09 08:27</td></tr>
  <tr><td><span class="n ja">${icon('mail', 14)}新規口座登録</span></td><td>Trading Platform</td><td>2020.10.04 02:58</td></tr></tbody></table>
  <div class="bar">${icon('chevthin', 10)}<i></i></div>`);

/* ---------- application ---------- */
define('trading-app', `
  :host{display:flex;flex-direction:column;height:100vh;position:relative;overflow:hidden}
  .main{flex:1;min-height:0;display:grid;grid-template-columns:210px 1fr}
  .docks{display:grid;grid-template-rows:1fr 1fr;min-height:0}
  news-terminal{height:68px;flex:none}
  history-center{position:absolute;left:240px;top:182px;bottom:159px;width:120px}
  open-dialog{position:absolute;left:312px;right:37px;top:170px;bottom:39px}
`, () => `<title-bar></title-bar><menu-bar></menu-bar><tool-bars></tool-bars>
  <div class="main"><div class="docks"><dock-panel caption="気配値表示: 23:57:59" tabs="通貨ペアリスト,ティックチャート"><market-watch></market-watch></dock-panel>
  <dock-panel inactive caption="ナビゲーター" tabs="全般,お気に入り"><nav-tree></nav-tree></dock-panel></div><price-chart></price-chart></div>
  <news-terminal></news-terminal><history-center></history-center><open-dialog></open-dialog>`);
</script>
</body>
</html>
